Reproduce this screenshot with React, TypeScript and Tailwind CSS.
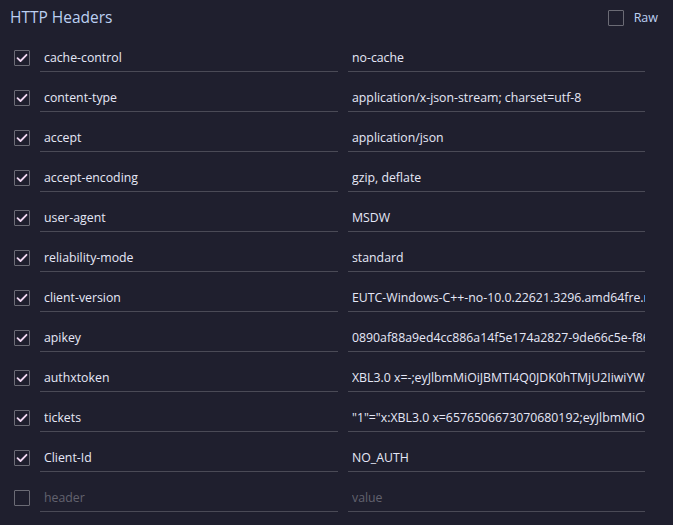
import React, { useState } from 'react';

type Header = { key: string; value: string; on: boolean };

const initialHeaders: Header[] = [
  { key: 'cache-control', value: 'no-cache', on: true },
  { key: 'content-type', value: 'application/x-json-stream; charset=utf-8', on: true },
  { key: 'accept', value: 'application/json', on: true },
  { key: 'accept-encoding', value: 'gzip, deflate', on: true },
  { key: 'user-agent', value: 'MSDW', on: true },
  { key: 'reliability-mode', value: 'standard', on: true },
  { key: 'client-version', value: 'EUTC-Windows-C++-no-10.0.22621.3296.amd64fre.ni_release.220506-1250', on: true },
  { key: 'apikey', value: '0890af88a9ed4cc886a14f5e174a2827-9de66c5e-f867-43a8-a7b8-e0ddd53c2223-7163', on: true },
  { key: 'authxtoken', value: 'XBL3.0 x=-;eyJlbmMiOiJBMTI4Q0JDK0hTMjU2IiwiYWxnIjoiUlNBLU9BRVAiLCJjdHkiOiJKV1QiLCJ6aXAiOiJERUYifQ', on: true },
  { key: 'tickets', value: '"1"="x:XBL3.0 x=6576506673070680192;eyJlbmMiOiJBMTI4Q0JDK0hTMjU2Iiwi', on: true },
  { key: 'Client-Id', value: 'NO_AUTH', on: true },
];

const Check = ({ checked, onClick }: { checked: boolean; onClick?: () => void }) => (
  <button
    onClick={onClick}
    className="w-[16px] h-[16px] shrink-0 border border-[#6b6b75] rounded-[1px] flex items-center justify-center bg-transparent"
  >
    {checked && (
      <svg width="12" height="10" viewBox="0 0 12 10" fill="none">
        <polyline points="1.5,5.2 4.5,8 10.5,1.8" stroke="#f2d9f2" strokeWidth="1.8" strokeLinecap="round" strokeLinejoin="round" />
      </svg>
    )}
  </button>
);

const Field = ({ value, placeholder, className }: { value?: string; placeholder?: string; className: string }) => (
  <input
    readOnly
    defaultValue={value}
    placeholder={placeholder}
    className={`h-[28px] pb-[1px] border-b border-[#4a4a56] bg-transparent pl-[4px] pr-0 text-[12.3px] text-[#e6e8f7] placeholder:text-[#62626e] outline-none ${className}`}
  />
);

export default function App() {
  const [headers, setHeaders] = useState(initialHeaders);
  const [raw, setRaw] = useState(false);

  const toggle = (i: number) =>
    setHeaders(h => h.map((x, j) => (j === i ? { ...x, on: !x.on } : x)));

  return (
    <div className="w-[673px] h-[525px] bg-[#1f1f2e] overflow-hidden font-['Open_Sans','Noto_Sans',sans-serif]">
      {/* Title bar */}
      <div className="h-[36px] flex items-center justify-between pl-[10px] pr-[15px]">
        <h1 className="text-[15.5px] text-[#bcd0f2] font-normal">HTTP Headers</h1>
        <label className="flex items-center gap-[10px] text-[12.5px] text-[#bcd0f2]">
          <Check checked={raw} onClick={() => setRaw(!raw)} />
          Raw
        </label>
      </div>

      {/* Header rows */}
      <div className="pt-[8px] flex flex-col gap-[12px]">
        {headers.map((h, i) => (
          <div key={h.key} className="flex items-center pl-[14px]">
            <Check checked={h.on} onClick={() => toggle(i)} />
            <Field value={h.key} className="ml-[10px] w-[298px]" />
            <Field value={h.value} className="ml-[10px] w-[297px]" />
          </div>
        ))}
        <div className="flex items-center pl-[14px]">
          <Check checked={false} />
          <Field placeholder="header" className="ml-[10px] w-[298px]" />
          <Field placeholder="value" className="ml-[10px] w-[297px]" />
        </div>
      </div>
    </div>
  );
}
